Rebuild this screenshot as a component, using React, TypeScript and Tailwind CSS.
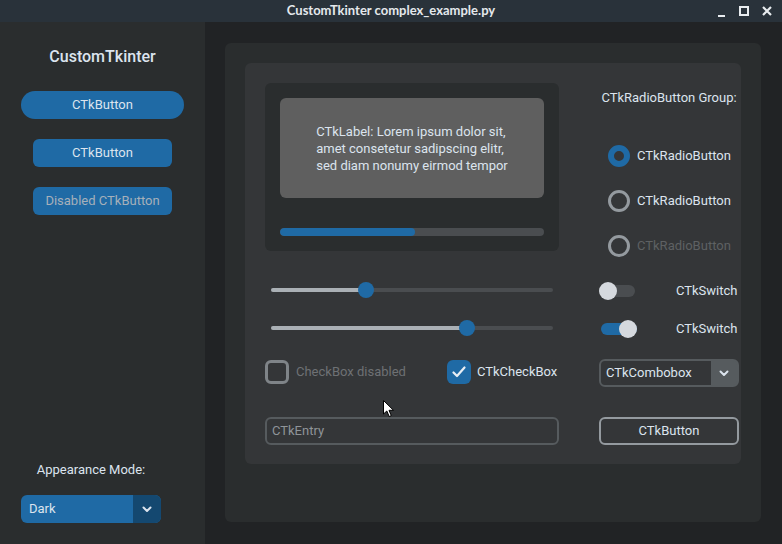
import React from "react";

const Chevron = ({ color = "#dce4ee" }: { color?: string }) => (
  <svg width="10" height="7" viewBox="0 0 10 7">
    <path d="M1.5 1.5 L5 5 L8.5 1.5" stroke={color} strokeWidth="2" fill="none" strokeLinecap="round" strokeLinejoin="round" />
  </svg>
);

const Radio = ({ state, label }: { state: "on" | "off" | "disabled"; label: string }) => (
  <div className="flex items-center h-[22px] pl-[9px] gap-[7px]">
    {state === "on" ? (
      <div className="w-[22px] h-[22px] rounded-full border-[6px] border-[#1f6aa5]" />
    ) : (
      <div className="w-[22px] h-[22px] rounded-full border-[3px] border-[#949a9f]" />
    )}
    <span className={state === "disabled" ? "text-[#5e6163]" : "text-[#dce4ee]"}>{label}</span>
  </div>
);

const Slider = ({ pct }: { pct: number }) => (
  <div className="h-[38px] flex items-center px-[6px]">
    <div className="relative w-full h-[4px] rounded-full bg-[#4a4d50]">
      <div className="absolute left-0 top-0 h-full rounded-full bg-[#aab0b5]" style={{ width: `${pct}%` }} />
      <div
        className="absolute top-1/2 w-[16px] h-[16px] -mt-[8px] -ml-[8px] rounded-full bg-[#1f6aa5]"
        style={{ left: `${pct}%` }}
      />
    </div>
  </div>
);

const Switch = ({ on }: { on: boolean }) => (
  <div className="relative w-[36px] h-[18px] flex items-center">
    <div className={`w-full h-[12px] rounded-full ${on ? "bg-[#1f6aa5]" : "bg-[#4a4d50]"}`} />
    <div className={`absolute top-0 w-[18px] h-[18px] rounded-full bg-[#d5d9de] ${on ? "right-0" : "left-0"}`} />
  </div>
);

export default function App() {
  return (
    <div
      className="w-[782px] h-[544px] flex flex-col overflow-hidden text-[13px] text-[#dce4ee] relative"
      style={{ fontFamily: "Roboto, 'Liberation Sans', sans-serif" }}
    >
      {/* title bar */}
      <div className="h-[22px] bg-[#29323a] flex items-center relative shrink-0">
        <div
          className="flex-1 text-center text-[13px] font-bold text-[#e4e8ec]"
          style={{ fontFamily: "Lato, 'DejaVu Sans', sans-serif" }}
        >
          CustomTkinter complex_example.py
        </div>
        <div className="absolute right-[10px] top-0 h-[22px] flex items-center gap-[13px]">
          <div className="w-[10px] h-[10px] flex items-end justify-center">
            <div className="w-[7px] h-[2px] bg-[#e8ecef] mb-[-1px]" />
          </div>
          <div className="w-[10px] h-[10px] border-2 border-[#e8ecef]" />
          <svg width="10" height="10" viewBox="0 0 10 10">
            <path d="M1 1 L9 9 M9 1 L1 9" stroke="#e8ecef" strokeWidth="2.2" />
          </svg>
        </div>
      </div>

      <div className="flex flex-1 min-h-0">
        {/* sidebar */}
        <div className="w-[205px] shrink-0 bg-[#2a2d2e] flex flex-col">
          <div className="text-center text-[16px] font-medium mt-[25px] leading-[20px]">CustomTkinter</div>
          <div className="mt-[24px] mx-[21px] h-[28px] rounded-full bg-[#1f6aa5] flex items-center justify-center">CTkButton</div>
          <div className="mt-[20px] mx-[33px] h-[28px] rounded-[6px] bg-[#1f6aa5] flex items-center justify-center">CTkButton</div>
          <div className="mt-[20px] mx-[33px] h-[28px] rounded-[6px] bg-[#1f6aa5] flex items-center justify-center text-[#a6b0ba]">
            Disabled CTkButton
          </div>
          <div className="flex-1" />
          <div className="w-[140px] ml-[21px] text-center leading-[16px]">Appearance Mode:</div>
          <div className="w-[140px] ml-[21px] mt-[17px] mb-[21px] h-[28px] rounded-[6px] bg-[#1f6aa5] flex overflow-hidden">
            <div className="flex-1 flex items-center pl-[8px]">Dark</div>
            <div className="w-[28px] bg-[#144870] flex items-center justify-center">
              <Chevron />
            </div>
          </div>
        </div>

        {/* main */}
        <div className="flex-1 min-w-0 bg-[#212325] pt-[21px] pl-[20px] pr-[21px] pb-[22px]">
          <div className="w-full h-full rounded-[6px] bg-[#2a2d2e] p-[20px] pb-[58px]">
            <div className="w-full h-full rounded-[6px] bg-[#343638] pt-[20px] pl-[20px] pr-[2px] flex gap-[40px]">
              {/* left column */}
              <div className="w-[294px] shrink-0 flex flex-col">
                <div className="h-[168px] rounded-[6px] bg-[#2a2d2e] p-[15px] flex flex-col">
                  <div className="h-[100px] rounded-[6px] bg-[#5f5f5f] flex items-center justify-center">
                    <div className="leading-[17px] text-left">
                      CTkLabel: Lorem ipsum dolor sit,
                      <br />
                      amet consetetur sadipscing elitr,
                      <br />
                      sed diam nonumy eirmod tempor
                    </div>
                  </div>
                  <div className="mt-[30px] h-[8px] rounded-full bg-[#4a4d50] overflow-hidden">
                    <div className="h-full w-[51%] bg-[#1f6aa5] rounded-full" />
                  </div>
                </div>
                <div className="mt-[20px]">
                  <Slider pct={33.7} />
                  <Slider pct={69.5} />
                </div>
                <div className="mt-[13px] h-[24px] flex items-center">
                  <div className="w-[24px] h-[24px] rounded-[6px] border-[3px] border-[#7f8488]" />
                  <span className="ml-[7px] text-[#6e7174]">CheckBox disabled</span>
                  <div className="ml-[41px] w-[24px] h-[24px] rounded-[6px] bg-[#1f6aa5] flex items-center justify-center">
                    <svg width="14" height="12" viewBox="0 0 14 12">
                      <path d="M1.5 6.5 L5 10 L12.5 1.5" stroke="#e8eef4" strokeWidth="2.2" fill="none" strokeLinecap="round" strokeLinejoin="round" />
                    </svg>
                  </div>
                  <span className="ml-[6px]">CTkCheckBox</span>
                </div>
                <div className="mt-[33px] h-[28px] rounded-[6px] border-2 border-[#565b5e] bg-[#343638] flex items-center pl-[5px] text-[#8f9498]">
                  CTkEntry
                </div>
              </div>

              {/* right column */}
              <div className="w-[140px] shrink-0 flex flex-col">
                <div className="h-[30px] flex items-center justify-center whitespace-nowrap">CTkRadioButton Group:</div>
                <div className="mt-[32px] flex flex-col gap-[23px]">
                  <Radio state="on" label="CTkRadioButton" />
                  <Radio state="off" label="CTkRadioButton" />
                  <Radio state="disabled" label="CTkRadioButton" />
                </div>
                <div className="mt-[15px] h-[38px] flex items-center">
                  <Switch on={false} />
                  <span className="ml-[41px]">CTkSwitch</span>
                </div>
                <div className="h-[38px] flex items-center">
                  <div className="ml-[2px]">
                    <Switch on={true} />
                  </div>
                  <span className="ml-[39px]">CTkSwitch</span>
                </div>
                <div className="mt-[11px] h-[28px] rounded-[6px] border-2 border-[#565b5e] bg-[#565b5e] flex overflow-hidden">
                  <div className="flex-1 bg-[#343638] flex items-center pl-[5px]">CTkCombobox</div>
                  <div className="w-[26px] flex items-center justify-center">
                    <Chevron />
                  </div>
                </div>
                <div className="mt-[30px] h-[28px] rounded-[6px] border-2 border-[#949a9f] flex items-center justify-center">
                  CTkButton
                </div>
              </div>
            </div>
          </div>
        </div>
      </div>

      {/* mouse cursor */}
      <svg className="absolute left-[383px] top-[400px]" width="12" height="18" viewBox="0 0 12 18">
        <path d="M0.5 0.5 L0.5 14 L3.8 11 L6.2 16.5 L8.3 15.6 L6 10.3 L10.5 10.3 Z" fill="#ffffff" stroke="#000000" strokeWidth="1" />
      </svg>
    </div>
  );
}
